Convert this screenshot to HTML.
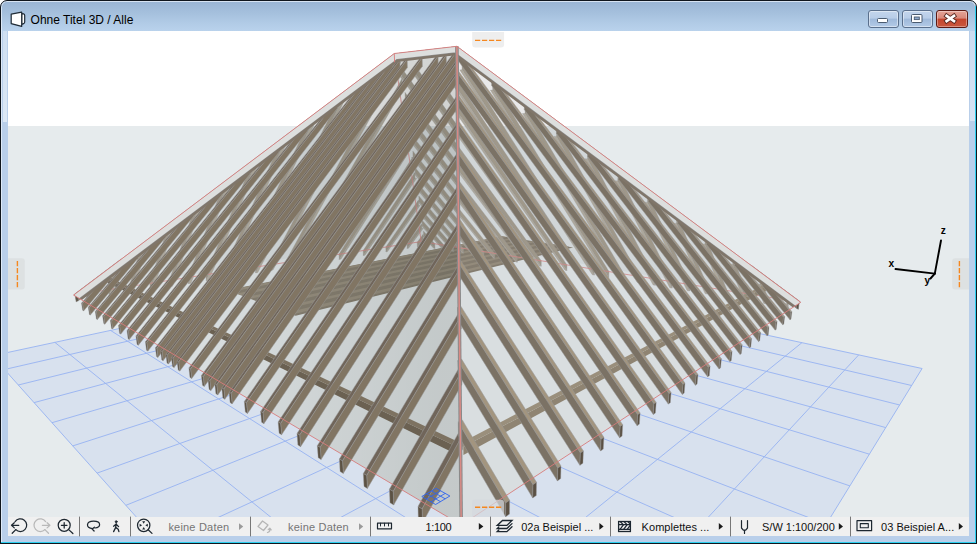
<!DOCTYPE html>
<html><head><meta charset="utf-8"><title>Ohne Titel 3D / Alle</title>
<style>
html,body{margin:0;padding:0;background:#fff;}
body{width:977px;height:544px;overflow:hidden;position:relative;font-family:"Liberation Sans","DejaVu Sans",sans-serif;}
#win{position:absolute;left:0;top:0;width:975px;height:560px;border:1px solid #10161d;border-radius:7px 7px 0 0;background:linear-gradient(#9ab5d4 0px,#a5c0dd 12px,#b1cbe6 22px,#b9d2ec 30px,#b9cfea 31px,#b9cfea 100%);overflow:hidden;box-shadow:inset 0 0 0 1px rgba(235,243,252,0.75);}
#botline{position:absolute;left:0;top:542.5px;width:977px;height:1.5px;background:#10161d;}
#title{position:absolute;left:29.6px;top:12px;font-size:12px;line-height:14px;color:#000;white-space:nowrap;}
#tb{position:absolute;left:8px;top:517px;width:961px;height:19px;background:#f0f0f0;}
.t{position:absolute;top:518px;height:19px;line-height:19px;font-size:11px;color:#111;white-space:nowrap;}
.g{color:#757575;}
.btn{position:absolute;top:9px;height:17.5px;border-radius:3px;box-sizing:border-box;}
</style></head><body>
<div id="win">
<div id="title">Ohne Titel 3D / Alle</div>
<div class="btn" style="left:866.5px;width:31px;border:1px solid #5a6f8c;background:linear-gradient(#c3d5ec 0,#b8cde8 45%,#9fb9da 50%,#b3cae6 100%);box-shadow:inset 0 0 0 1px rgba(255,255,255,.45)"></div>
<div class="btn" style="left:900.5px;width:31px;border:1px solid #5a6f8c;background:linear-gradient(#c3d5ec 0,#b8cde8 45%,#9fb9da 50%,#b3cae6 100%);box-shadow:inset 0 0 0 1px rgba(255,255,255,.45)"></div>
<div class="btn" style="left:934.5px;width:32px;border:1px solid #5c1a14;background:linear-gradient(#e5a497 0,#d8887a 45%,#c4452d 50%,#c9583f 100%);box-shadow:inset 0 0 0 1px rgba(255,255,255,.35)"></div>
</div>
<div style="position:absolute;left:1px;top:541.5px;width:975px;height:1px;background:#2cd0f0"></div><div style="position:absolute;left:975px;top:6px;width:1px;height:537px;background:#2cd0f0"></div><div id="botline"></div><div style="position:absolute;left:2.5px;top:31px;width:4.5px;height:90.5px;background:linear-gradient(#cfdff1,#dce8f5)"></div><div style="position:absolute;left:970px;top:31px;width:4.5px;height:90px;background:linear-gradient(#cbdcf0,#d6e3f3)"></div>
<div id="tb"></div>
<svg id="scene" width="977" height="544" viewBox="0 0 977 544" style="position:absolute;left:0;top:0">
<defs><clipPath id="vc"><rect x="8" y="31" width="961" height="486"/></clipPath></defs>
<g clip-path="url(#vc)">
<rect x="8" y="31" width="961" height="95" fill="#ffffff"/>
<rect x="8" y="126" width="961" height="391" fill="#e6ebed"/>
<g id="grid">
<polygon points="547.6,977.1 922.1,368.5 428.0,262.3 -7.8,355.8" fill="#d8e1ee"/>
<line x1="547.6" y1="977.1" x2="-7.8" y2="355.8" stroke="#96b2f2" stroke-width="0.9"/>
<line x1="644.5" y1="819.7" x2="54.8" y2="342.3" stroke="#96b2f2" stroke-width="0.9"/>
<line x1="711.2" y1="711.3" x2="110.5" y2="330.4" stroke="#96b2f2" stroke-width="0.9"/>
<line x1="759.9" y1="632.2" x2="160.4" y2="319.7" stroke="#96b2f2" stroke-width="0.9"/>
<line x1="797.0" y1="571.8" x2="205.4" y2="310.0" stroke="#96b2f2" stroke-width="0.9"/>
<line x1="826.3" y1="524.3" x2="246.2" y2="301.3" stroke="#96b2f2" stroke-width="0.9"/>
<line x1="849.9" y1="485.9" x2="283.3" y2="293.3" stroke="#96b2f2" stroke-width="0.9"/>
<line x1="869.4" y1="454.2" x2="317.2" y2="286.0" stroke="#96b2f2" stroke-width="0.9"/>
<line x1="885.8" y1="427.6" x2="348.3" y2="279.4" stroke="#96b2f2" stroke-width="0.9"/>
<line x1="899.7" y1="405.0" x2="377.0" y2="273.2" stroke="#96b2f2" stroke-width="0.9"/>
<line x1="911.7" y1="385.5" x2="403.5" y2="267.5" stroke="#96b2f2" stroke-width="0.9"/>
<line x1="922.1" y1="368.5" x2="428.0" y2="262.3" stroke="#96b2f2" stroke-width="0.9"/>
<line x1="547.6" y1="977.1" x2="922.1" y2="368.5" stroke="#96b2f2" stroke-width="0.9"/>
<line x1="417.3" y1="831.2" x2="858.7" y2="354.9" stroke="#96b2f2" stroke-width="0.9"/>
<line x1="324.9" y1="728.0" x2="801.9" y2="342.7" stroke="#96b2f2" stroke-width="0.9"/>
<line x1="256.2" y1="651.0" x2="750.8" y2="331.7" stroke="#96b2f2" stroke-width="0.9"/>
<line x1="202.9" y1="591.5" x2="704.7" y2="321.8" stroke="#96b2f2" stroke-width="0.9"/>
<line x1="160.5" y1="544.0" x2="662.7" y2="312.7" stroke="#96b2f2" stroke-width="0.9"/>
<line x1="125.9" y1="505.3" x2="624.4" y2="304.5" stroke="#96b2f2" stroke-width="0.9"/>
<line x1="97.1" y1="473.1" x2="589.3" y2="297.0" stroke="#96b2f2" stroke-width="0.9"/>
<line x1="72.8" y1="445.9" x2="557.0" y2="290.0" stroke="#96b2f2" stroke-width="0.9"/>
<line x1="52.0" y1="422.7" x2="527.2" y2="283.6" stroke="#96b2f2" stroke-width="0.9"/>
<line x1="34.1" y1="402.6" x2="499.7" y2="277.7" stroke="#96b2f2" stroke-width="0.9"/>
<line x1="18.3" y1="385.0" x2="474.1" y2="272.2" stroke="#96b2f2" stroke-width="0.9"/>
<line x1="4.5" y1="369.5" x2="450.2" y2="267.1" stroke="#96b2f2" stroke-width="0.9"/>
<line x1="-7.8" y1="355.8" x2="428.0" y2="262.3" stroke="#96b2f2" stroke-width="0.9"/>
</g>
<clipPath id="sil"><polygon points="73.6,295.1 461.2,525.0 800.7,302.3 456.9,46.3 394.3,53.5"/></clipPath>
<g clip-path="url(#sil)"><rect x="0" y="0" width="977" height="126" fill="#fff"/><rect x="0" y="126" width="977" height="420" fill="#e6ebed"/></g>
<clipPath id="sil2"><polygon points="74.9,302.7 462.3,616.4 799.8,310.1 457.0,56.0 394.6,62.3"/></clipPath>
<g id="back" clip-path="url(#sil2)">
<polygon points="73.6,295.1 421.0,235.6 394.3,53.5" fill="#000" fill-opacity="0.03"/>
<polygon points="800.7,302.3 421.0,235.6 394.3,53.5 456.9,46.3" fill="#000" fill-opacity="0.03"/>
<polygon points="295.7,315.8 573.1,247.4 501.7,236.2 227.2,290.1" fill="#8c8476"/>
<polygon points="292.2,314.5 569.6,246.8 564.5,246.0 287.2,312.6" fill="#9d9484"/>
<polygon points="281.0,310.3 558.3,245.0 553.4,244.3 276.2,308.5" fill="#9d9484"/>
<polygon points="270.3,306.3 547.3,243.3 542.6,242.6 265.7,304.5" fill="#9d9484"/>
<polygon points="260.0,302.4 536.7,241.7 532.1,240.9 255.6,300.7" fill="#9d9484"/>
<polygon points="250.2,298.7 526.4,240.0 521.8,239.3 245.9,297.1" fill="#9d9484"/>
<polygon points="240.7,295.2 516.3,238.5 511.9,237.8 236.6,293.6" fill="#9d9484"/>
<polygon points="231.6,291.8 506.5,236.9 502.2,236.3 227.7,290.3" fill="#9d9484"/>
<polygon points="425.8,242.3 424.9,241.4 425.0,246.0 425.9,246.9" fill="#a9a193" stroke="#a0a0a0" stroke-width="0.35"/>
<polygon points="425.9,246.9 425.0,246.0 423.8,245.7 424.7,246.7" fill="#bab3a5" stroke="#a0a0a0" stroke-width="0.35"/>
<polygon points="434.8,243.8 423.5,231.2 423.7,236.0 434.9,248.4" fill="#a9a193" stroke="#a0a0a0" stroke-width="0.35"/>
<polygon points="434.9,248.4 423.7,236.0 422.4,235.8 433.6,248.2" fill="#bab3a5" stroke="#a0a0a0" stroke-width="0.35"/>
<polygon points="444.1,245.3 422.1,220.3 422.2,225.3 444.2,250.0" fill="#a9a193" stroke="#a0a0a0" stroke-width="0.35"/>
<polygon points="444.2,250.0 422.2,225.3 420.9,225.1 442.9,249.7" fill="#bab3a5" stroke="#a0a0a0" stroke-width="0.35"/>
<polygon points="453.6,246.8 420.5,208.6 420.7,213.8 453.7,251.6" fill="#a9a193" stroke="#a0a0a0" stroke-width="0.35"/>
<polygon points="453.7,251.6 420.7,213.8 419.3,213.6 452.4,251.3" fill="#bab3a5" stroke="#a0a0a0" stroke-width="0.35"/>
<polygon points="463.4,248.4 418.8,195.9 419.0,201.4 463.5,253.2" fill="#a9a193" stroke="#a0a0a0" stroke-width="0.35"/>
<polygon points="463.5,253.2 419.0,201.4 417.6,201.2 462.1,253.0" fill="#bab3a5" stroke="#a0a0a0" stroke-width="0.35"/>
<polygon points="473.6,250.0 417.0,182.2 417.2,187.9 473.6,254.9" fill="#a9a193" stroke="#a0a0a0" stroke-width="0.35"/>
<polygon points="473.6,254.9 417.2,187.9 415.7,187.8 472.2,254.7" fill="#bab3a5" stroke="#a0a0a0" stroke-width="0.35"/>
<polygon points="484.0,251.6 415.0,167.4 415.2,173.3 484.0,256.7" fill="#a9a193" stroke="#a0a0a0" stroke-width="0.35"/>
<polygon points="484.0,256.7 415.2,173.3 413.7,173.2 482.6,256.4" fill="#bab3a5" stroke="#a0a0a0" stroke-width="0.35"/>
<polygon points="494.8,253.4 412.9,151.2 413.0,157.4 494.7,258.5" fill="#a9a193" stroke="#a0a0a0" stroke-width="0.35"/>
<polygon points="494.7,258.5 413.0,157.4 411.5,157.4 493.3,258.2" fill="#bab3a5" stroke="#a0a0a0" stroke-width="0.35"/>
<polygon points="505.9,255.1 410.5,133.4 410.7,140.0 505.8,260.3" fill="#a9a193" stroke="#a0a0a0" stroke-width="0.35"/>
<polygon points="505.8,260.3 410.7,140.0 409.1,140.0 504.3,260.0" fill="#bab3a5" stroke="#a0a0a0" stroke-width="0.35"/>
<polygon points="517.3,257.0 407.9,113.9 408.1,120.9 517.2,262.2" fill="#a9a193" stroke="#a0a0a0" stroke-width="0.35"/>
<polygon points="517.2,262.2 408.1,120.9 406.4,120.9 515.7,261.9" fill="#bab3a5" stroke="#a0a0a0" stroke-width="0.35"/>
<polygon points="529.1,258.9 405.0,92.4 405.3,99.8 529.0,264.2" fill="#a9a193" stroke="#a0a0a0" stroke-width="0.35"/>
<polygon points="529.0,264.2 405.3,99.8 403.5,99.9 527.4,263.9" fill="#bab3a5" stroke="#a0a0a0" stroke-width="0.35"/>
<polygon points="541.3,260.8 401.9,68.5 402.1,76.4 541.2,266.2" fill="#a9a193" stroke="#a0a0a0" stroke-width="0.35"/>
<polygon points="541.2,266.2 402.1,76.4 400.2,76.6 539.5,265.9" fill="#bab3a5" stroke="#a0a0a0" stroke-width="0.35"/>
<polygon points="554.0,262.8 415.7,66.5 415.9,74.6 553.8,268.3" fill="#a9a193" stroke="#a0a0a0" stroke-width="0.35"/>
<polygon points="553.8,268.3 415.9,74.6 413.9,74.8 552.1,268.0" fill="#bab3a5" stroke="#a0a0a0" stroke-width="0.35"/>
<polygon points="567.0,264.9 430.4,64.8 430.6,73.1 566.8,270.5" fill="#a9a193" stroke="#a0a0a0" stroke-width="0.35"/>
<polygon points="566.8,270.5 430.6,73.1 428.5,73.2 565.0,270.2" fill="#bab3a5" stroke="#a0a0a0" stroke-width="0.35"/>
<polygon points="580.5,267.1 445.8,63.0 445.9,71.5 580.3,272.8" fill="#a9a193" stroke="#a0a0a0" stroke-width="0.35"/>
<polygon points="580.3,272.8 445.9,71.5 443.8,71.6 578.4,272.4" fill="#bab3a5" stroke="#a0a0a0" stroke-width="0.35"/>
<polygon points="594.5,269.3 462.0,61.1 462.1,69.8 594.3,275.1" fill="#a9a193" stroke="#a0a0a0" stroke-width="0.35"/>
<polygon points="594.3,275.1 462.1,69.8 459.8,69.9 592.3,274.7" fill="#bab3a5" stroke="#a0a0a0" stroke-width="0.35"/>
<polygon points="609.0,271.6 492.7,81.5 492.7,90.1 608.7,277.5" fill="#a9a193" stroke="#a0a0a0" stroke-width="0.35"/>
<polygon points="608.7,277.5 492.7,90.1 490.4,90.2 606.7,277.1" fill="#bab3a5" stroke="#a0a0a0" stroke-width="0.35"/>
<polygon points="624.0,274.0 525.1,105.1 525.0,113.5 623.7,280.0" fill="#a9a193" stroke="#a0a0a0" stroke-width="0.35"/>
<polygon points="623.7,280.0 525.0,113.5 522.5,113.5 621.6,279.6" fill="#bab3a5" stroke="#a0a0a0" stroke-width="0.35"/>
<polygon points="639.6,276.5 556.7,128.2 556.5,136.4 639.2,282.6" fill="#a9a193" stroke="#a0a0a0" stroke-width="0.35"/>
<polygon points="639.2,282.6 556.5,136.4 554.0,136.4 637.1,282.2" fill="#bab3a5" stroke="#a0a0a0" stroke-width="0.35"/>
<polygon points="655.7,279.1 587.7,150.8 587.5,158.9 655.3,285.3" fill="#a9a193" stroke="#a0a0a0" stroke-width="0.35"/>
<polygon points="655.3,285.3 587.5,158.9 584.9,158.8 653.1,284.9" fill="#bab3a5" stroke="#a0a0a0" stroke-width="0.35"/>
<polygon points="672.5,281.8 618.1,172.9 617.7,180.9 672.1,288.1" fill="#a9a193" stroke="#a0a0a0" stroke-width="0.35"/>
<polygon points="672.1,288.1 617.7,180.9 615.1,180.7 669.8,287.7" fill="#bab3a5" stroke="#a0a0a0" stroke-width="0.35"/>
<polygon points="690.0,284.6 647.8,194.6 647.4,202.4 689.5,291.0" fill="#a9a193" stroke="#a0a0a0" stroke-width="0.35"/>
<polygon points="689.5,291.0 647.4,202.4 644.6,202.2 687.1,290.6" fill="#bab3a5" stroke="#a0a0a0" stroke-width="0.35"/>
<polygon points="708.2,287.5 676.9,215.8 676.4,223.5 707.6,294.0" fill="#a9a193" stroke="#a0a0a0" stroke-width="0.35"/>
<polygon points="707.6,294.0 676.4,223.5 673.6,223.2 705.1,293.6" fill="#bab3a5" stroke="#a0a0a0" stroke-width="0.35"/>
<polygon points="727.1,290.5 705.5,236.6 704.9,244.2 726.5,297.2" fill="#a9a193" stroke="#a0a0a0" stroke-width="0.35"/>
<polygon points="726.5,297.2 704.9,244.2 702.0,243.8 723.8,296.7" fill="#bab3a5" stroke="#a0a0a0" stroke-width="0.35"/>
<polygon points="746.8,293.7 733.4,257.0 732.7,264.4 746.1,300.5" fill="#a9a193" stroke="#a0a0a0" stroke-width="0.35"/>
<polygon points="746.1,300.5 732.7,264.4 729.8,264.0 743.4,300.0" fill="#bab3a5" stroke="#a0a0a0" stroke-width="0.35"/>
<polygon points="767.3,297.0 760.8,277.0 760.1,284.3 766.6,303.9" fill="#a9a193" stroke="#a0a0a0" stroke-width="0.35"/>
<polygon points="766.6,303.9 760.1,284.3 757.1,283.8 763.7,303.4" fill="#bab3a5" stroke="#a0a0a0" stroke-width="0.35"/>
<polygon points="788.8,300.4 787.7,296.6 786.9,303.7 788.0,307.5" fill="#a9a193" stroke="#a0a0a0" stroke-width="0.35"/>
<polygon points="788.0,307.5 786.9,303.7 783.9,303.2 785.0,306.9" fill="#bab3a5" stroke="#a0a0a0" stroke-width="0.35"/>
<polygon points="417.2,242.2 423.2,234.2 423.3,238.9 417.4,246.8" fill="#a9a193" stroke="#a0a0a0" stroke-width="0.35"/>
<polygon points="417.4,246.8 423.3,238.9 424.6,238.7 418.7,246.6" fill="#bab3a5" stroke="#a0a0a0" stroke-width="0.35"/>
<polygon points="407.1,243.8 421.7,223.7 421.8,228.5 407.2,248.4" fill="#a9a193" stroke="#a0a0a0" stroke-width="0.35"/>
<polygon points="407.2,248.4 421.8,228.5 423.3,228.3 408.6,248.2" fill="#bab3a5" stroke="#a0a0a0" stroke-width="0.35"/>
<polygon points="396.6,245.4 420.2,212.3 420.3,217.4 396.8,250.1" fill="#a9a193" stroke="#a0a0a0" stroke-width="0.35"/>
<polygon points="396.8,250.1 420.3,217.4 421.8,217.2 398.3,249.9" fill="#bab3a5" stroke="#a0a0a0" stroke-width="0.35"/>
<polygon points="385.8,247.0 418.5,200.1 418.7,205.4 386.0,251.9" fill="#a9a193" stroke="#a0a0a0" stroke-width="0.35"/>
<polygon points="386.0,251.9 418.7,205.4 420.2,205.2 387.5,251.6" fill="#bab3a5" stroke="#a0a0a0" stroke-width="0.35"/>
<polygon points="374.7,248.8 416.7,186.9 416.9,192.5 374.9,253.7" fill="#a9a193" stroke="#a0a0a0" stroke-width="0.35"/>
<polygon points="374.9,253.7 416.9,192.5 418.5,192.3 376.5,253.4" fill="#bab3a5" stroke="#a0a0a0" stroke-width="0.35"/>
<polygon points="363.2,250.5 414.8,172.6 415.0,178.4 363.4,255.5" fill="#a9a193" stroke="#a0a0a0" stroke-width="0.35"/>
<polygon points="363.4,255.5 415.0,178.4 416.6,178.3 365.0,255.2" fill="#bab3a5" stroke="#a0a0a0" stroke-width="0.35"/>
<polygon points="351.3,252.4 412.7,157.1 412.9,163.2 351.5,257.4" fill="#a9a193" stroke="#a0a0a0" stroke-width="0.35"/>
<polygon points="351.5,257.4 412.9,163.2 414.6,163.1 353.2,257.1" fill="#bab3a5" stroke="#a0a0a0" stroke-width="0.35"/>
<polygon points="339.0,254.3 410.4,140.2 410.6,146.5 339.3,259.4" fill="#a9a193" stroke="#a0a0a0" stroke-width="0.35"/>
<polygon points="339.3,259.4 410.6,146.5 412.4,146.5 341.0,259.1" fill="#bab3a5" stroke="#a0a0a0" stroke-width="0.35"/>
<polygon points="326.2,256.2 407.9,121.6 408.1,128.3 326.6,261.5" fill="#a9a193" stroke="#a0a0a0" stroke-width="0.35"/>
<polygon points="326.6,261.5 408.1,128.3 410.0,128.3 328.3,261.1" fill="#bab3a5" stroke="#a0a0a0" stroke-width="0.35"/>
<polygon points="313.0,258.3 405.1,101.1 405.3,108.3 313.4,263.6" fill="#a9a193" stroke="#a0a0a0" stroke-width="0.35"/>
<polygon points="313.4,263.6 405.3,108.3 407.4,108.3 315.2,263.2" fill="#bab3a5" stroke="#a0a0a0" stroke-width="0.35"/>
<polygon points="299.4,260.4 402.1,78.5 402.3,86.1 299.8,265.8" fill="#a9a193" stroke="#a0a0a0" stroke-width="0.35"/>
<polygon points="299.8,265.8 402.3,86.1 404.4,86.2 301.7,265.4" fill="#bab3a5" stroke="#a0a0a0" stroke-width="0.35"/>
<polygon points="285.2,262.6 398.6,53.4 398.9,61.5 285.6,268.1" fill="#a9a193" stroke="#a0a0a0" stroke-width="0.35"/>
<polygon points="285.6,268.1 398.9,61.5 401.2,61.7 287.6,267.7" fill="#bab3a5" stroke="#a0a0a0" stroke-width="0.35"/>
<polygon points="270.5,264.8 372.3,68.8 372.6,76.8 271.0,270.4" fill="#a9a193" stroke="#a0a0a0" stroke-width="0.35"/>
<polygon points="271.0,270.4 372.6,76.8 375.0,77.0 273.0,270.0" fill="#bab3a5" stroke="#a0a0a0" stroke-width="0.35"/>
<polygon points="255.2,267.2 342.6,90.7 343.0,98.6 255.7,272.9" fill="#a9a193" stroke="#a0a0a0" stroke-width="0.35"/>
<polygon points="255.7,272.9 343.0,98.6 345.4,98.7 257.8,272.5" fill="#bab3a5" stroke="#a0a0a0" stroke-width="0.35"/>
<polygon points="239.3,269.6 313.1,112.4 313.6,120.2 239.9,275.4" fill="#a9a193" stroke="#a0a0a0" stroke-width="0.35"/>
<polygon points="239.9,275.4 313.6,120.2 316.2,120.3 242.1,275.0" fill="#bab3a5" stroke="#a0a0a0" stroke-width="0.35"/>
<polygon points="222.9,272.2 284.1,133.9 284.7,141.6 223.5,278.1" fill="#a9a193" stroke="#a0a0a0" stroke-width="0.35"/>
<polygon points="223.5,278.1 284.7,141.6 287.3,141.5 225.8,277.7" fill="#bab3a5" stroke="#a0a0a0" stroke-width="0.35"/>
<polygon points="205.7,274.8 255.3,155.1 256.0,162.7 206.3,280.8" fill="#a9a193" stroke="#a0a0a0" stroke-width="0.35"/>
<polygon points="206.3,280.8 256.0,162.7 258.7,162.6 208.7,280.4" fill="#bab3a5" stroke="#a0a0a0" stroke-width="0.35"/>
<polygon points="187.8,277.6 226.9,176.1 227.6,183.6 188.5,283.7" fill="#a9a193" stroke="#a0a0a0" stroke-width="0.35"/>
<polygon points="188.5,283.7 227.6,183.6 230.4,183.4 191.0,283.3" fill="#bab3a5" stroke="#a0a0a0" stroke-width="0.35"/>
<polygon points="169.2,280.4 198.8,196.8 199.6,204.2 169.9,286.7" fill="#a9a193" stroke="#a0a0a0" stroke-width="0.35"/>
<polygon points="169.9,286.7 199.6,204.2 202.5,204.0 172.5,286.2" fill="#bab3a5" stroke="#a0a0a0" stroke-width="0.35"/>
<polygon points="149.7,283.4 171.0,217.3 171.9,224.7 150.6,289.8" fill="#a9a193" stroke="#a0a0a0" stroke-width="0.35"/>
<polygon points="150.6,289.8 171.9,224.7 174.8,224.3 153.3,289.3" fill="#bab3a5" stroke="#a0a0a0" stroke-width="0.35"/>
<polygon points="129.4,286.6 143.5,237.7 144.4,244.9 130.4,293.1" fill="#a9a193" stroke="#a0a0a0" stroke-width="0.35"/>
<polygon points="130.4,293.1 144.4,244.9 147.4,244.5 133.2,292.6" fill="#bab3a5" stroke="#a0a0a0" stroke-width="0.35"/>
<polygon points="108.2,289.8 116.3,257.7 117.3,264.9 109.2,296.5" fill="#a9a193" stroke="#a0a0a0" stroke-width="0.35"/>
<polygon points="109.2,296.5 117.3,264.9 120.4,264.4 112.2,296.0" fill="#bab3a5" stroke="#a0a0a0" stroke-width="0.35"/>
<polygon points="86.0,293.3 89.4,277.6 90.4,284.6 87.1,300.1" fill="#a9a193" stroke="#a0a0a0" stroke-width="0.35"/>
<polygon points="87.1,300.1 90.4,284.6 93.6,284.1 90.2,299.5" fill="#bab3a5" stroke="#a0a0a0" stroke-width="0.35"/>
<line x1="73.6" y1="295.1" x2="421.2" y2="241.6" stroke="#dc8f8f" stroke-width="0.8"/>
<line x1="800.7" y1="302.3" x2="421.2" y2="241.6" stroke="#dc8f8f" stroke-width="0.8"/>
<line x1="421.2" y1="241.6" x2="394.3" y2="53.5" stroke="#dc8f8f" stroke-width="0.8"/>
</g>
<g id="front">
<linearGradient id="lg" gradientUnits="userSpaceOnUse" x1="140" y1="0" x2="440" y2="0"><stop offset="0" stop-color="#000a00" stop-opacity="0.035"/><stop offset="1" stop-color="#000a00" stop-opacity="0.15"/></linearGradient>
<polygon points="73.6,295.1 461.2,525.0 456.9,46.3 394.3,53.5" fill="url(#lg)"/>
<polygon points="461.2,525.0 800.7,302.3 456.9,46.3" fill="#000" fill-opacity="0.055"/>
<polygon points="457.8,447.2 105.3,277.9 105.9,281.9 457.9,455.1" fill="#6b6152"/>
<polygon points="457.8,447.2 105.3,277.9 109.4,277.2 463.3,444.3" fill="#7d7261"/>
<polygon points="463.3,447.1 768.7,285.1 768.2,289.4 463.4,455.0" fill="#8f8472"/>
<polygon points="463.3,447.1 768.7,285.1 764.7,284.5 457.8,444.4" fill="#9a8f7c"/>
<polygon points="82.4,303.7 109.7,271.6 108.7,271.2 81.5,303.2" fill="#70655a" stroke="#989898" stroke-width="0.5"/>
<polygon points="82.4,303.7 109.7,271.6 110.7,278.7 83.6,310.9" fill="#817563" stroke="#989898" stroke-width="0.5"/>
<polygon points="82.4,303.7 81.5,303.2 82.7,310.3 83.6,310.9" fill="#5c5244" stroke="#989898" stroke-width="0.4"/>
<polygon points="89.2,307.8 137.0,251.1 135.9,250.7 88.3,307.2" fill="#70655a" stroke="#989898" stroke-width="0.5"/>
<polygon points="89.2,307.8 137.0,251.1 137.9,258.3 90.3,315.1" fill="#817563" stroke="#989898" stroke-width="0.5"/>
<polygon points="89.2,307.8 88.3,307.2 89.4,314.5 90.3,315.1" fill="#5c5244" stroke="#989898" stroke-width="0.4"/>
<polygon points="96.3,312.1 164.5,230.4 163.4,230.0 95.3,311.5" fill="#70655a" stroke="#989898" stroke-width="0.5"/>
<polygon points="96.3,312.1 164.5,230.4 165.4,237.6 97.4,319.5" fill="#817563" stroke="#989898" stroke-width="0.5"/>
<polygon points="96.3,312.1 95.3,311.5 96.4,318.9 97.4,319.5" fill="#5c5244" stroke="#989898" stroke-width="0.4"/>
<polygon points="103.7,316.6 192.4,209.4 191.2,209.1 102.6,315.9" fill="#70655a" stroke="#989898" stroke-width="0.5"/>
<polygon points="103.7,316.6 192.4,209.4 193.2,216.7 104.8,324.2" fill="#817563" stroke="#989898" stroke-width="0.5"/>
<polygon points="103.7,316.6 102.6,315.9 103.8,323.5 104.8,324.2" fill="#5c5244" stroke="#989898" stroke-width="0.4"/>
<polygon points="111.4,321.3 220.6,188.1 219.3,188.0 110.4,320.6" fill="#70655a" stroke="#989898" stroke-width="0.5"/>
<polygon points="111.4,321.3 220.6,188.1 221.3,195.6 112.6,329.0" fill="#817563" stroke="#989898" stroke-width="0.5"/>
<polygon points="111.4,321.3 110.4,320.6 111.5,328.4 112.6,329.0" fill="#5c5244" stroke="#989898" stroke-width="0.4"/>
<polygon points="119.6,326.2 249.1,166.7 247.7,166.5 118.5,325.5" fill="#70655a" stroke="#989898" stroke-width="0.5"/>
<polygon points="119.6,326.2 249.1,166.7 249.8,174.2 120.8,334.1" fill="#817563" stroke="#989898" stroke-width="0.5"/>
<polygon points="119.6,326.2 118.5,325.5 119.6,333.4 120.8,334.1" fill="#5c5244" stroke="#989898" stroke-width="0.4"/>
<polygon points="128.2,331.4 278.0,145.0 276.5,144.9 127.0,330.6" fill="#70655a" stroke="#989898" stroke-width="0.5"/>
<polygon points="128.2,331.4 278.0,145.0 278.6,152.6 129.3,339.5" fill="#817563" stroke="#989898" stroke-width="0.5"/>
<polygon points="128.2,331.4 127.0,330.6 128.1,338.8 129.3,339.5" fill="#5c5244" stroke="#989898" stroke-width="0.4"/>
<polygon points="137.2,336.8 307.2,123.0 305.6,123.0 135.9,336.1" fill="#70655a" stroke="#989898" stroke-width="0.5"/>
<polygon points="137.2,336.8 307.2,123.0 307.7,130.8 138.4,345.2" fill="#817563" stroke="#989898" stroke-width="0.5"/>
<polygon points="137.2,336.8 135.9,336.1 137.1,344.4 138.4,345.2" fill="#5c5244" stroke="#989898" stroke-width="0.4"/>
<polygon points="146.7,342.6 336.7,100.7 335.0,100.8 145.4,341.8" fill="#70655a" stroke="#989898" stroke-width="0.5"/>
<polygon points="146.7,342.6 336.7,100.7 337.1,108.6 147.9,351.1" fill="#817563" stroke="#989898" stroke-width="0.5"/>
<polygon points="146.7,342.6 145.4,341.8 146.5,350.3 147.9,351.1" fill="#5c5244" stroke="#989898" stroke-width="0.4"/>
<polygon points="156.8,348.6 366.6,78.3 364.8,78.4 155.4,347.8" fill="#70655a" stroke="#989898" stroke-width="0.5"/>
<polygon points="156.8,348.6 366.6,78.3 366.9,86.2 157.9,357.4" fill="#817563" stroke="#989898" stroke-width="0.5"/>
<polygon points="156.8,348.6 155.4,347.8 156.5,356.5 157.9,357.4" fill="#5c5244" stroke="#989898" stroke-width="0.4"/>
<polygon points="162.0,351.8 381.7,66.9 379.8,67.1 160.6,350.9" fill="#70655a" stroke="#989898" stroke-width="0.5"/>
<polygon points="162.0,351.8 381.7,66.9 382.0,75.0 163.1,360.7" fill="#817563" stroke="#989898" stroke-width="0.5"/>
<polygon points="162.0,351.8 160.6,350.9 161.7,359.8 163.1,360.7" fill="#5c5244" stroke="#989898" stroke-width="0.4"/>
<polygon points="167.4,355.1 392.8,60.8 390.9,61.0 165.9,354.2" fill="#70655a" stroke="#989898" stroke-width="0.5"/>
<polygon points="167.4,355.1 392.8,60.8 393.0,68.9 168.5,364.0" fill="#817563" stroke="#989898" stroke-width="0.5"/>
<polygon points="167.4,355.1 165.9,354.2 167.0,363.1 168.5,364.0" fill="#5c5244" stroke="#989898" stroke-width="0.4"/>
<polygon points="172.9,358.4 399.9,60.0 397.9,60.2 171.4,357.5" fill="#70655a" stroke="#989898" stroke-width="0.5"/>
<polygon points="172.9,358.4 399.9,60.0 400.1,68.3 174.1,367.5" fill="#817563" stroke="#989898" stroke-width="0.5"/>
<polygon points="172.9,358.4 171.4,357.5 172.5,366.5 174.1,367.5" fill="#5c5244" stroke="#989898" stroke-width="0.4"/>
<polygon points="178.6,361.9 407.2,59.3 405.2,59.5 177.0,360.9" fill="#70655a" stroke="#989898" stroke-width="0.5"/>
<polygon points="178.6,361.9 407.2,59.3 407.4,67.6 179.8,371.1" fill="#817563" stroke="#989898" stroke-width="0.5"/>
<polygon points="178.6,361.9 177.0,360.9 178.2,370.1 179.8,371.1" fill="#5c5244" stroke="#989898" stroke-width="0.4"/>
<polygon points="190.5,369.1 422.2,57.7 420.1,57.9 188.9,368.0" fill="#70655a" stroke="#989898" stroke-width="0.5"/>
<polygon points="190.5,369.1 422.2,57.7 422.4,66.2 191.7,378.5" fill="#817563" stroke="#989898" stroke-width="0.5"/>
<polygon points="190.5,369.1 188.9,368.0 190.0,377.5 191.7,378.5" fill="#5c5244" stroke="#989898" stroke-width="0.4"/>
<polygon points="203.2,376.7 438.1,56.1 435.9,56.3 201.4,375.6" fill="#70655a" stroke="#989898" stroke-width="0.5"/>
<polygon points="203.2,376.7 438.1,56.1 438.2,64.8 204.3,386.4" fill="#817563" stroke="#989898" stroke-width="0.5"/>
<polygon points="203.2,376.7 201.4,375.6 202.5,385.3 204.3,386.4" fill="#5c5244" stroke="#989898" stroke-width="0.4"/>
<polygon points="209.8,380.7 446.3,55.2 444.0,55.4 208.0,379.6" fill="#70655a" stroke="#989898" stroke-width="0.5"/>
<polygon points="209.8,380.7 446.3,55.2 446.4,64.1 210.9,390.6" fill="#817563" stroke="#989898" stroke-width="0.5"/>
<polygon points="209.8,380.7 208.0,379.6 209.1,389.4 210.9,390.6" fill="#5c5244" stroke="#989898" stroke-width="0.4"/>
<polygon points="216.7,384.9 458.1,49.6 455.8,49.9 214.8,383.7" fill="#70655a" stroke="#989898" stroke-width="0.5"/>
<polygon points="216.7,384.9 458.1,49.6 458.2,58.6 217.8,394.9" fill="#817563" stroke="#989898" stroke-width="0.5"/>
<polygon points="216.7,384.9 214.8,383.7 215.9,393.7 217.8,394.9" fill="#5c5244" stroke="#989898" stroke-width="0.4"/>
<polygon points="223.8,389.1 458.3,60.6 455.9,60.8 221.8,388.0" fill="#70655a" stroke="#989898" stroke-width="0.5"/>
<polygon points="223.8,389.1 458.3,60.6 458.4,69.7 224.8,399.3" fill="#817563" stroke="#989898" stroke-width="0.5"/>
<polygon points="223.8,389.1 221.8,388.0 222.9,398.1 224.8,399.3" fill="#5c5244" stroke="#989898" stroke-width="0.4"/>
<polygon points="231.1,393.5 458.4,72.1 456.0,72.3 229.1,392.3" fill="#70655a" stroke="#989898" stroke-width="0.5"/>
<polygon points="231.1,393.5 458.4,72.1 458.5,81.4 232.1,403.9" fill="#817563" stroke="#989898" stroke-width="0.5"/>
<polygon points="231.1,393.5 229.1,392.3 230.1,402.6 232.1,403.9" fill="#5c5244" stroke="#989898" stroke-width="0.4"/>
<polygon points="246.4,402.8 458.7,96.8 456.1,96.9 244.3,401.5" fill="#70655a" stroke="#989898" stroke-width="0.5"/>
<polygon points="246.4,402.8 458.7,96.8 458.8,106.4 247.5,413.5" fill="#817563" stroke="#989898" stroke-width="0.5"/>
<polygon points="246.4,402.8 244.3,401.5 245.3,412.1 247.5,413.5" fill="#5c5244" stroke="#989898" stroke-width="0.4"/>
<polygon points="262.9,412.8 459.0,124.0 456.3,124.0 260.6,411.4" fill="#70655a" stroke="#989898" stroke-width="0.5"/>
<polygon points="262.9,412.8 459.0,124.0 459.1,134.0 263.9,423.7" fill="#817563" stroke="#989898" stroke-width="0.5"/>
<polygon points="262.9,412.8 260.6,411.4 261.6,422.3 263.9,423.7" fill="#5c5244" stroke="#989898" stroke-width="0.4"/>
<polygon points="280.6,423.5 459.3,154.1 456.5,154.0 278.1,422.0" fill="#70655a" stroke="#989898" stroke-width="0.5"/>
<polygon points="280.6,423.5 459.3,154.1 459.4,164.6 281.6,434.8" fill="#817563" stroke="#989898" stroke-width="0.5"/>
<polygon points="280.6,423.5 278.1,422.0 279.1,433.2 281.6,434.8" fill="#5c5244" stroke="#989898" stroke-width="0.4"/>
<polygon points="299.7,435.0 459.7,187.6 456.7,187.4 297.0,433.4" fill="#70655a" stroke="#989898" stroke-width="0.5"/>
<polygon points="299.7,435.0 459.7,187.6 459.8,198.6 300.6,446.7" fill="#817563" stroke="#989898" stroke-width="0.5"/>
<polygon points="299.7,435.0 297.0,433.4 297.9,445.0 300.6,446.7" fill="#5c5244" stroke="#989898" stroke-width="0.4"/>
<polygon points="320.2,447.4 460.1,225.2 456.9,224.7 317.3,445.7" fill="#70655a" stroke="#989898" stroke-width="0.5"/>
<polygon points="320.2,447.4 460.1,225.2 460.2,236.6 321.1,459.5" fill="#817563" stroke="#989898" stroke-width="0.5"/>
<polygon points="320.2,447.4 317.3,445.7 318.2,457.7 321.1,459.5" fill="#5c5244" stroke="#989898" stroke-width="0.4"/>
<polygon points="342.5,460.9 460.6,267.6 457.2,266.9 339.4,459.0" fill="#70655a" stroke="#989898" stroke-width="0.5"/>
<polygon points="342.5,460.9 460.6,267.6 460.7,279.6 343.3,473.4" fill="#817563" stroke="#989898" stroke-width="0.5"/>
<polygon points="342.5,460.9 339.4,459.0 340.1,471.5 343.3,473.4" fill="#5c5244" stroke="#989898" stroke-width="0.4"/>
<polygon points="366.7,475.5 461.1,315.8 457.5,314.8 363.3,473.5" fill="#70655a" stroke="#989898" stroke-width="0.5"/>
<polygon points="366.7,475.5 461.1,315.8 461.3,328.3 367.4,488.5" fill="#817563" stroke="#989898" stroke-width="0.5"/>
<polygon points="366.7,475.5 363.3,473.5 364.0,486.4 367.4,488.5" fill="#5c5244" stroke="#989898" stroke-width="0.4"/>
<polygon points="393.2,491.5 461.8,371.1 457.9,369.7 389.4,489.2" fill="#70655a" stroke="#989898" stroke-width="0.5"/>
<polygon points="393.2,491.5 461.8,371.1 461.9,384.3 393.7,505.0" fill="#817563" stroke="#989898" stroke-width="0.5"/>
<polygon points="393.2,491.5 389.4,489.2 390.0,502.7 393.7,505.0" fill="#5c5244" stroke="#989898" stroke-width="0.4"/>
<polygon points="422.1,509.0 462.5,435.2 458.3,433.2 418.0,506.5" fill="#70655a" stroke="#989898" stroke-width="0.5"/>
<polygon points="422.1,509.0 462.5,435.2 462.6,449.0 422.5,523.0" fill="#817563" stroke="#989898" stroke-width="0.5"/>
<polygon points="422.1,509.0 418.0,506.5 418.4,520.4 422.5,523.0" fill="#5c5244" stroke="#989898" stroke-width="0.4"/>
<polygon points="790.9,312.3 763.2,278.4 764.2,277.9 791.9,311.7" fill="#a3957f" stroke="#989898" stroke-width="0.5"/>
<polygon points="790.9,312.3 763.2,278.4 762.4,285.8 790.0,319.8" fill="#7b7265" stroke="#989898" stroke-width="0.5"/>
<polygon points="790.9,312.3 791.9,311.7 791.0,319.1 790.0,319.8" fill="#5a5043" stroke="#989898" stroke-width="0.4"/>
<polygon points="783.6,317.2 735.5,257.8 736.6,257.4 784.7,316.5" fill="#a3957f" stroke="#989898" stroke-width="0.5"/>
<polygon points="783.6,317.2 735.5,257.8 734.7,265.4 782.7,324.8" fill="#7b7265" stroke="#989898" stroke-width="0.5"/>
<polygon points="783.6,317.2 784.7,316.5 783.8,324.1 782.7,324.8" fill="#5a5043" stroke="#989898" stroke-width="0.4"/>
<polygon points="776.0,322.3 707.2,236.8 708.5,236.4 777.1,321.6" fill="#a3957f" stroke="#989898" stroke-width="0.5"/>
<polygon points="776.0,322.3 707.2,236.8 706.6,244.5 775.1,330.1" fill="#7b7265" stroke="#989898" stroke-width="0.5"/>
<polygon points="776.0,322.3 777.1,321.6 776.2,329.4 775.1,330.1" fill="#5a5043" stroke="#989898" stroke-width="0.4"/>
<polygon points="767.9,327.7 678.3,215.4 679.7,215.1 769.0,326.9" fill="#a3957f" stroke="#989898" stroke-width="0.5"/>
<polygon points="767.9,327.7 678.3,215.4 677.8,223.2 767.0,335.7" fill="#7b7265" stroke="#989898" stroke-width="0.5"/>
<polygon points="767.9,327.7 769.0,326.9 768.2,334.9 767.0,335.7" fill="#5a5043" stroke="#989898" stroke-width="0.4"/>
<polygon points="759.4,333.4 648.9,193.5 650.4,193.2 760.6,332.6" fill="#a3957f" stroke="#989898" stroke-width="0.5"/>
<polygon points="759.4,333.4 648.9,193.5 648.4,201.4 758.5,341.6" fill="#7b7265" stroke="#989898" stroke-width="0.5"/>
<polygon points="759.4,333.4 760.6,332.6 759.7,340.8 758.5,341.6" fill="#5a5043" stroke="#989898" stroke-width="0.4"/>
<polygon points="750.4,339.4 618.8,171.1 620.4,170.9 751.6,338.6" fill="#a3957f" stroke="#989898" stroke-width="0.5"/>
<polygon points="750.4,339.4 618.8,171.1 618.4,179.2 749.5,347.8" fill="#7b7265" stroke="#989898" stroke-width="0.5"/>
<polygon points="750.4,339.4 751.6,338.6 750.8,346.9 749.5,347.8" fill="#5a5043" stroke="#989898" stroke-width="0.4"/>
<polygon points="740.8,345.8 588.0,148.2 589.7,148.2 742.2,344.9" fill="#a3957f" stroke="#989898" stroke-width="0.5"/>
<polygon points="740.8,345.8 588.0,148.2 587.7,156.5 740.0,354.4" fill="#7b7265" stroke="#989898" stroke-width="0.5"/>
<polygon points="740.8,345.8 742.2,344.9 741.3,353.5 740.0,354.4" fill="#5a5043" stroke="#989898" stroke-width="0.4"/>
<polygon points="730.7,352.6 556.6,124.9 558.5,124.9 732.1,351.6" fill="#a3957f" stroke="#989898" stroke-width="0.5"/>
<polygon points="730.7,352.6 556.6,124.9 556.4,133.3 729.8,361.5" fill="#7b7265" stroke="#989898" stroke-width="0.5"/>
<polygon points="730.7,352.6 732.1,351.6 731.3,360.5 729.8,361.5" fill="#5a5043" stroke="#989898" stroke-width="0.4"/>
<polygon points="719.9,359.8 524.4,101.0 526.5,101.1 721.4,358.7" fill="#a3957f" stroke="#989898" stroke-width="0.5"/>
<polygon points="719.9,359.8 524.4,101.0 524.3,109.6 719.1,368.9" fill="#7b7265" stroke="#989898" stroke-width="0.5"/>
<polygon points="719.9,359.8 721.4,358.7 720.6,367.8 719.1,368.9" fill="#5a5043" stroke="#989898" stroke-width="0.4"/>
<polygon points="708.4,367.4 491.6,76.6 493.8,76.8 710.1,366.3" fill="#a3957f" stroke="#989898" stroke-width="0.5"/>
<polygon points="708.4,367.4 491.6,76.6 491.6,85.4 707.6,376.8" fill="#7b7265" stroke="#989898" stroke-width="0.5"/>
<polygon points="708.4,367.4 710.1,366.3 709.3,375.7 707.6,376.8" fill="#5a5043" stroke="#989898" stroke-width="0.4"/>
<polygon points="696.2,375.6 455.8,48.7 458.1,48.9 698.0,374.4" fill="#a3957f" stroke="#989898" stroke-width="0.5"/>
<polygon points="696.2,375.6 455.8,48.7 455.9,57.6 695.4,385.3" fill="#7b7265" stroke="#989898" stroke-width="0.5"/>
<polygon points="696.2,375.6 698.0,374.4 697.1,384.1 695.4,385.3" fill="#5a5043" stroke="#989898" stroke-width="0.4"/>
<polygon points="683.1,384.4 455.9,70.7 458.4,70.9 685.0,383.1" fill="#a3957f" stroke="#989898" stroke-width="0.5"/>
<polygon points="683.1,384.4 455.9,70.7 456.0,80.0 682.3,394.4" fill="#7b7265" stroke="#989898" stroke-width="0.5"/>
<polygon points="683.1,384.4 685.0,383.1 684.2,393.1 682.3,394.4" fill="#5a5043" stroke="#989898" stroke-width="0.4"/>
<polygon points="669.1,393.7 456.1,94.9 458.6,95.0 671.1,392.4" fill="#a3957f" stroke="#989898" stroke-width="0.5"/>
<polygon points="669.1,393.7 456.1,94.9 456.2,104.5 668.3,404.1" fill="#7b7265" stroke="#989898" stroke-width="0.5"/>
<polygon points="669.1,393.7 671.1,392.4 670.3,402.7 668.3,404.1" fill="#5a5043" stroke="#989898" stroke-width="0.4"/>
<polygon points="654.0,403.8 456.3,121.4 458.9,121.4 656.2,402.4" fill="#a3957f" stroke="#989898" stroke-width="0.5"/>
<polygon points="654.0,403.8 456.3,121.4 456.4,131.5 653.3,414.5" fill="#7b7265" stroke="#989898" stroke-width="0.5"/>
<polygon points="654.0,403.8 656.2,402.4 655.4,413.0 653.3,414.5" fill="#5a5043" stroke="#989898" stroke-width="0.4"/>
<polygon points="637.7,414.7 456.5,150.8 459.3,150.7 640.1,413.1" fill="#a3957f" stroke="#989898" stroke-width="0.5"/>
<polygon points="637.7,414.7 456.5,150.8 456.6,161.2 637.1,425.7" fill="#7b7265" stroke="#989898" stroke-width="0.5"/>
<polygon points="637.7,414.7 640.1,413.1 639.4,424.1 637.1,425.7" fill="#5a5043" stroke="#989898" stroke-width="0.4"/>
<polygon points="620.2,426.4 456.7,183.4 459.6,183.2 622.7,424.7" fill="#a3957f" stroke="#989898" stroke-width="0.5"/>
<polygon points="620.2,426.4 456.7,183.4 456.8,194.3 619.6,437.8" fill="#7b7265" stroke="#989898" stroke-width="0.5"/>
<polygon points="620.2,426.4 622.7,424.7 622.1,436.1 619.6,437.8" fill="#5a5043" stroke="#989898" stroke-width="0.4"/>
<polygon points="601.1,439.2 456.9,219.9 460.0,219.4 603.9,437.3" fill="#a3957f" stroke="#989898" stroke-width="0.5"/>
<polygon points="601.1,439.2 456.9,219.9 457.0,231.3 600.6,451.0" fill="#7b7265" stroke="#989898" stroke-width="0.5"/>
<polygon points="601.1,439.2 603.9,437.3 603.3,449.1 600.6,451.0" fill="#5a5043" stroke="#989898" stroke-width="0.4"/>
<polygon points="580.4,453.0 457.2,260.9 460.5,260.2 583.4,451.0" fill="#a3957f" stroke="#989898" stroke-width="0.5"/>
<polygon points="580.4,453.0 457.2,260.9 457.3,272.8 579.9,465.3" fill="#7b7265" stroke="#989898" stroke-width="0.5"/>
<polygon points="580.4,453.0 583.4,451.0 582.9,463.2 579.9,465.3" fill="#5a5043" stroke="#989898" stroke-width="0.4"/>
<polygon points="557.8,468.1 457.5,307.4 461.0,306.4 561.0,466.0" fill="#a3957f" stroke="#989898" stroke-width="0.5"/>
<polygon points="557.8,468.1 457.5,307.4 457.6,319.9 557.4,480.9" fill="#7b7265" stroke="#989898" stroke-width="0.5"/>
<polygon points="557.8,468.1 561.0,466.0 560.7,478.6 557.4,480.9" fill="#5a5043" stroke="#989898" stroke-width="0.4"/>
<polygon points="533.0,484.7 457.8,360.6 461.6,359.1 536.5,482.3" fill="#a3957f" stroke="#989898" stroke-width="0.5"/>
<polygon points="533.0,484.7 457.8,360.6 458.0,373.6 532.7,498.0" fill="#7b7265" stroke="#989898" stroke-width="0.5"/>
<polygon points="533.0,484.7 536.5,482.3 536.3,495.5 532.7,498.0" fill="#5a5043" stroke="#989898" stroke-width="0.4"/>
<polygon points="505.7,503.0 458.2,421.9 462.3,419.9 509.6,500.3" fill="#a3957f" stroke="#989898" stroke-width="0.5"/>
<polygon points="505.7,503.0 458.2,421.9 458.4,435.6 505.6,516.8" fill="#7b7265" stroke="#989898" stroke-width="0.5"/>
<polygon points="505.7,503.0 509.6,500.3 509.5,514.1 505.6,516.8" fill="#5a5043" stroke="#989898" stroke-width="0.4"/>
<polygon points="77.1,292.8 123.2,258.2 124.3,266.2 78.4,300.8" fill="#817563" stroke="#989898" stroke-width="0.4"/>
<polygon points="74.9,293.8 121.2,258.9 122.4,267.1 76.2,301.8" fill="#817563" stroke="#989898" stroke-width="0.4"/>
<polygon points="77.1,292.8 74.9,293.8 76.2,301.8 78.4,300.8" fill="#5c5244" stroke="#989898" stroke-width="0.4"/>
<polygon points="799.3,301.0 752.0,265.8 751.2,274.3 798.3,309.3" fill="#7b7265" stroke="#989898" stroke-width="0.4"/>
<polygon points="797.3,299.9 750.2,264.9 749.4,273.4 796.3,308.2" fill="#7b7265" stroke="#989898" stroke-width="0.4"/>
<polygon points="799.3,301.0 797.3,299.9 796.3,308.2 798.3,309.3" fill="#5a5043" stroke="#989898" stroke-width="0.4"/>
<g clip-path="url(#sil)" fill="none" stroke-linejoin="miter">
<polyline points="73.6,295.1 394.3,53.5 456.9,46.3 800.7,302.3" stroke="#80766a" stroke-width="17.6"/>
<polyline points="73.6,295.1 394.3,53.5 456.9,46.3 800.7,302.3" stroke="#8e8e8e" stroke-width="12.6"/>
<polyline points="73.6,295.1 394.3,53.5 456.9,46.3 800.7,302.3" stroke="#dddfde" stroke-width="11.6"/>
</g>
<line x1="394.3" y1="53.5" x2="394.6" y2="62.3" stroke="#d77c7c" stroke-width="0.9"/>
<line x1="461.2" y1="525.0" x2="456.9" y2="46.3" stroke="#8a8a8a" stroke-width="3.6"/>
<line x1="461.2" y1="525.0" x2="456.9" y2="46.3" stroke="#d98a85" stroke-width="1.5"/>
<line x1="73.6" y1="295.1" x2="461.2" y2="525.0" stroke="#d77c7c" stroke-width="0.9"/>
<line x1="461.2" y1="525.0" x2="800.7" y2="302.3" stroke="#d77c7c" stroke-width="0.9"/>
<line x1="800.7" y1="302.3" x2="456.9" y2="46.3" stroke="#d77c7c" stroke-width="0.9"/>
<line x1="456.9" y1="46.3" x2="394.3" y2="53.5" stroke="#d77c7c" stroke-width="0.9"/>
<line x1="394.3" y1="53.5" x2="73.6" y2="295.1" stroke="#d77c7c" stroke-width="0.9"/>
</g>
<g id="marker">
<line x1="435.6" y1="504.5" x2="421.8" y2="496.5" stroke="#2f63ee" stroke-width="0.9"/>
<line x1="435.6" y1="504.5" x2="449.9" y2="496.0" stroke="#2f63ee" stroke-width="0.9"/>
<line x1="440.4" y1="501.6" x2="426.6" y2="493.7" stroke="#2f63ee" stroke-width="0.9"/>
<line x1="430.9" y1="501.8" x2="445.2" y2="493.4" stroke="#2f63ee" stroke-width="0.9"/>
<line x1="445.2" y1="498.8" x2="431.4" y2="491.0" stroke="#2f63ee" stroke-width="0.9"/>
<line x1="426.3" y1="499.1" x2="440.6" y2="490.8" stroke="#2f63ee" stroke-width="0.9"/>
<line x1="449.9" y1="496.0" x2="436.1" y2="488.3" stroke="#2f63ee" stroke-width="0.9"/>
<line x1="421.8" y1="496.5" x2="436.1" y2="488.3" stroke="#2f63ee" stroke-width="0.9"/>
</g>
<!-- axes -->
<g stroke="#000" stroke-width="1.9" stroke-linecap="round" fill="none">
<line x1="934.8" y1="273.6" x2="895.5" y2="269"/>
<line x1="934.8" y1="273.6" x2="941" y2="240.5"/>
<line x1="934.8" y1="273.6" x2="930.5" y2="278.5"/>
</g>
<g font-family="Liberation Sans, DejaVu Sans, sans-serif" font-size="10.2" font-weight="bold" fill="#000">
<text x="888.5" y="266.8">x</text><text x="940.8" y="234">z</text><text x="924.5" y="283.8">y</text>
</g>
<!-- tabs -->
<path d="M472.2,32H504.1V44.6Q504.1,47.6 501.1,47.6H475.2Q472.2,47.6 472.2,44.6Z" fill="#eeeeee"/>
<path d="M475,40.4H501.2" stroke="#f5871f" stroke-width="1.4" stroke-dasharray="5.2 1.8" fill="none"/>
<path d="M8,258.2H21.8Q24.8,258.2 24.8,261.2V286.6Q24.8,289.6 21.8,289.6H8Z" fill="#dde1e2"/>
<path d="M17.4,261V287.2" stroke="#f5871f" stroke-width="1.4" stroke-dasharray="5.2 1.8" fill="none"/>
<path d="M969,258.2H955.2Q952.2,258.2 952.2,261.2V286.6Q952.2,289.6 955.2,289.6H969Z" fill="#dde1e2"/>
<path d="M959.4,261V287.2" stroke="#f5871f" stroke-width="1.4" stroke-dasharray="5.2 1.8" fill="none"/>
<path d="M472,517V502.8Q472,499.8 475,499.8H501Q504,499.8 504,502.8V517Z" fill="#d4d8de" fill-opacity="0.7"/>
<path d="M475,507.2H501.2" stroke="#f5871f" stroke-width="1.4" stroke-dasharray="5.2 1.8" fill="none"/>
</g>
<!-- title icon -->
<g fill="#fff" stroke="#1e2a35" stroke-width="1.2" stroke-linejoin="round">
<path d="M21.7,13.6L23.6,13.9Q24.7,14.2 24.7,15.4V22Q24.7,23.2 23.6,23.6L21.7,24.4Z"/>
<path d="M11.2,14.1L21.7,12.2V26.4L11.2,23.6Z"/>
</g>
<!-- caption button glyphs -->
<rect x="877.5" y="18.5" width="10" height="4" rx="1" fill="#fff" stroke="#4a5b70" stroke-width="1"/>
<rect x="911.5" y="14.5" width="10.5" height="8" rx="1" fill="#fff" stroke="#4a5b70" stroke-width="1"/>
<rect x="914.3" y="17" width="5" height="2.6" fill="#8fa9cc" stroke="#4a5b70" stroke-width="0.9"/>
<path d="M946.6,15.9L954,21.1M954,15.9L946.6,21.1" stroke="#5a2a22" stroke-width="4.4" stroke-linecap="square"/>
<path d="M946.6,15.9L954,21.1M954,15.9L946.6,21.1" stroke="#fff" stroke-width="2.6" stroke-linecap="square"/>
<g fill="none" stroke="#1d2730" stroke-width="1.25" stroke-linecap="round" stroke-linejoin="round">
<!-- separators -->
<g stroke="#777" stroke-width="1">
<path d="M79.5,517V536M130.5,517V536M250.5,517V536M370.5,517V536M490.5,517V536M610.5,517V536M730.5,517V536M850.5,517V536"/>
</g>
<!-- icon1 prev zoom -->
<path d="M15.1,521.6A6.35,6.35 0 1 1 15.8,529.6"/>
<path d="M11.5,525.3H18.8M14.3,522.7L11.5,525.3L14.3,527.9"/>
<path d="M15.8,529.6L12.2,533.3"/>
<!-- icon2 next zoom (grey) -->
<g stroke="#b9b9b9">
<path d="M45.6,521.6A6.35,6.35 0 1 0 44.9,529.6"/>
<path d="M42.4,525.3H49.8M47.1,522.7L49.9,525.3L47.1,527.9"/>
<path d="M44.9,529.6L48.5,533.3"/>
</g>
<!-- icon3 zoom in -->
<circle cx="64.2" cy="525.3" r="6"/>
<path d="M61.4,525.3H67M64.2,522.5V528.1"/>
<path d="M68.7,529.6L72.9,533.5"/>
<!-- icon4 orbit -->
<path d="M92.6,528.6C88.8,528.4 87.3,526.5 87.5,524.6C87.8,522.4 90.6,521.2 93.6,521.2C96.8,521.2 99.6,522.4 99.6,524.7C99.6,526.6 97.4,527.7 95,528"/>
<path d="M94.4,527.2L92.2,529L94.1,531"/>
<!-- icon5 walker -->
<circle cx="116.2" cy="521.7" r="1" fill="#1d2730" stroke-width="0.8"/>
<path d="M116.2,523.6L115.6,527.6L113.6,531.6M115.7,527.4L118.2,529.2L118.9,531.6M116,524.2L113.6,526.2M116.2,524.2L118.6,526.6" stroke-width="1.3"/>
<!-- icon6 zoom fit -->
<circle cx="143.7" cy="525.3" r="6.2"/>
<path d="M148.2,529.7L152,533.4"/>
<g fill="#1d2730" stroke="none">
<path d="M143.7,523.7L142.2,521.2H145.2Z"/><path d="M143.7,526.9L142.2,529.4H145.2Z"/>
<path d="M142.1,525.3L139.6,523.8V526.8Z"/><path d="M145.3,525.3L147.8,523.8V526.8Z"/>
</g>
<!-- icon7 eraser grey -->
<g stroke="#b5b5b5">
<path d="M258,526.5L262.5,521L268,525L263.5,530.5Z"/>
<path d="M267.5,532.5C269.5,532 270.2,530.5 269.8,528.6M268.2,529.6L269.8,528.2L271.2,529.8"/>
</g>
<!-- ruler icon -->
<g stroke-width="1.2">
<rect x="377.5" y="523.2" width="14" height="5.6"/>
<path d="M380.5,523.2V526M384.5,523.2V526M388.5,523.2V526" stroke-width="1"/>
</g>
<!-- layers icon -->
<g stroke-width="1.3" stroke-linejoin="miter">
<path d="M502.5,520.5H512L506.9,525.4H497.2Z"/>
<path d="M498.8,526.9L497.2,528.5H506.9L512,523.6"/>
<path d="M498.8,530L497.2,531.6H506.9L512,526.7"/>
</g>
<!-- hatch icon -->
<g stroke-width="1.3" stroke-linejoin="miter">
<rect x="618.6" y="521.5" width="11.8" height="10"/>
<path d="M618.6,524.6H630.4M618.6,529.4H630.4"/>
<path d="M620.2,529.2L623.4,524.8M623.8,529.2L627,524.8M627.4,529.2L630.2,525.4M620.4,521.8L623,524.4M624.2,521.8L626.8,524.4M628,521.8L630,523.8" stroke-width="1.25"/>
</g>
<!-- pen icon -->
<path d="M741.5,520.5V528L743.3,530.2H745.7L747.5,528V520.5M744.5,530.2V533.4" stroke-width="1.2"/>
<!-- rect icon -->
<rect x="857" y="520.7" width="14.6" height="10" stroke-width="1.2"/>
<rect x="860.3" y="523.6" width="8" height="4.2" stroke-width="1.1"/>
</g>
<!-- arrows -->
<g fill="#9a9a9a"><path d="M239,523.2L243.2,526.6L239,530Z"/><path d="M359,523.2L363.2,526.6L359,530Z"/></g>
<g fill="#1a1a1a"><path d="M478.8,523L483.4,526.4L478.8,529.8Z"/><path d="M599.4,523L603.6,526.4L599.4,529.8Z"/><path d="M718.8,523L723,526.4L718.8,529.8Z"/><path d="M838.8,523L843,526.4L838.8,529.8Z"/><path d="M958.8,523L963,526.4L958.8,529.8Z"/></g>

</svg>
<div class="t g" id="t1" style="left:168.4px;letter-spacing:0.2px">keine Daten</div>
<div class="t g" id="t2" style="left:288px;letter-spacing:0.2px">keine Daten</div>
<div class="t" id="t3" style="left:425.4px;letter-spacing:-0.3px">1:100</div>
<div class="t" id="t4" style="left:521.2px">02a Beispiel ...</div>
<div class="t" id="t5" style="left:641.6px;letter-spacing:0.04px">Komplettes ...</div>
<div class="t" id="t6" style="left:762px">S/W 1:100/200</div>
<div class="t" id="t7" style="left:881px;letter-spacing:0.03px">03 Beispiel A...</div>

</body></html>
